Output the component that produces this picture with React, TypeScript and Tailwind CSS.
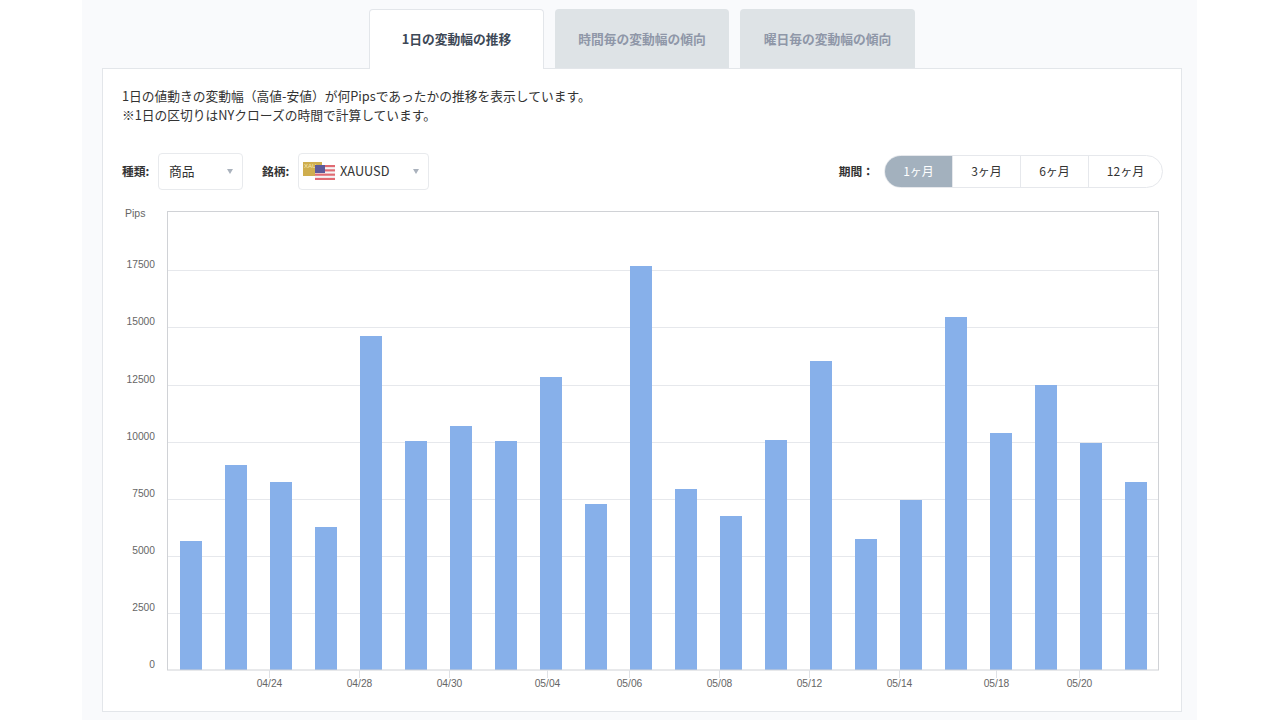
const TOPS = [541, 465, 482, 527, 336, 441, 426, 441, 377, 504, 266, 489, 516, 440, 361, 539, 500, 317, 433, 385, 443, 482];
const GRID = [
  { y: 270, label: '17500' },
  { y: 327, label: '15000' },
  { y: 385, label: '12500' },
  { y: 442, label: '10000' },
  { y: 499, label: '7500' },
  { y: 556, label: '5000' },
  { y: 613, label: '2500' },
];
const TICKS = [
  { x: 269, label: '04/24' },
  { x: 359, label: '04/28' },
  { x: 449, label: '04/30' },
  { x: 547, label: '05/04' },
  { x: 629, label: '05/06' },
  { x: 719, label: '05/08' },
  { x: 809, label: '05/12' },
  { x: 899, label: '05/14' },
  { x: 996, label: '05/18' },
  { x: 1079, label: '05/20' },
];
const PERIODS = ['1ヶ月', '3ヶ月', '6ヶ月', '12ヶ月'];

function Caret() {
  return <span className="h-0 w-0 border-x-[3.5px] border-t-[5px] border-x-transparent border-t-[#aab2bd]" />;
}

function XauFlag() {
  return (
    <svg width="33" height="18" viewBox="0 0 33 18" className="shrink-0">
      <rect x="0" y="0" width="19" height="14" fill="#cfae4e" />
      <text x="1" y="6" fontSize="6" fill="#f5e7b5" fontFamily="Liberation Sans, sans-serif">XAU</text>
      <rect x="12" y="3" width="20" height="15" fill="#f4f4f6" />
      {[0, 2, 4, 6].map((i) => (
        <rect key={i} x="12" y={3 + i * 2.15} width="20" height="2.15" fill="#e06a72" />
      ))}
      <rect x="12" y="3" width="10" height="8" fill="#5c5a9a" />
    </svg>
  );
}

function Chart() {
  return (
    <svg width="1078" height="510" viewBox="103 205 1078 510" className="block" fontFamily="Liberation Sans, Arial, sans-serif">
      <text x="125" y="217" fontSize="10.5" fill="#666">Pips</text>
      {GRID.map((g) => (
        <g key={g.y}>
          <line x1="167" x2="1159" y1={g.y + 0.5} y2={g.y + 0.5} stroke="#e6e8ec" />
          <text x="155" y={g.y - 2} fontSize="10.25" fill="#666" textAnchor="end">{g.label}</text>
        </g>
      ))}
      <text x="155" y="668" fontSize="10.25" fill="#666" textAnchor="end">0</text>
      {TOPS.map((top, i) => (
        <rect key={i} x={180 + i * 45} y={top} width="22" height={670 - top} fill="#87b0ea" />
      ))}
      <rect x="167.5" y="211.5" width="991" height="458.5" fill="none" stroke="#d0d2d6" />
      {TICKS.map((t) => (
        <g key={t.x}>
          <line x1={t.x + 0.5} x2={t.x + 0.5} y1="670" y2="678" stroke="#e0e2e6" />
          <text x={t.x + 0.5} y="687" fontSize="10.25" fill="#666" textAnchor="middle">{t.label}</text>
        </g>
      ))}
    </svg>
  );
}

export default function App() {
  return (
    <div className="h-[720px] w-[1280px] overflow-hidden bg-white font-['Noto_Sans_CJK_JP','Noto_Sans',sans-serif] text-[#333]">
      <div className="ml-[82px] h-full w-[1115px] bg-[#f9fafc] pt-[9px]">
        <div className="relative z-10 ml-[287px] flex gap-[11px]">
          <div className="-mb-px flex h-[60px] w-[175px] items-center justify-center rounded-t border border-b-0 border-[#e3e6ea] bg-white pb-[1px] text-[12.75px] font-bold text-[#3d4856]">
            1日の変動幅の推移
          </div>
          <div className="flex h-[59px] w-[174px] items-center justify-center rounded-t bg-[#dee3e6] text-[12.75px] font-bold text-[#8f97a8]">
            時間毎の変動幅の傾向
          </div>
          <div className="flex h-[59px] w-[175px] items-center justify-center rounded-t bg-[#dee3e6] text-[12.75px] font-bold text-[#8f97a8]">
            曜日毎の変動幅の傾向
          </div>
        </div>
        <div className="ml-[20px] h-[644px] w-[1080px] border border-[#e3e6ea] bg-white">
          <div className="pl-[19px] pr-[18px] pt-[17px]">
            <p className="text-[12.75px] leading-[19px]">
              1日の値動きの変動幅（高値-安値）が何Pipsであったかの推移を表示しています。
              <br />
              ※1日の区切りはNYクローズの時間で計算しています。
            </p>
            <div className="mt-[29px] flex h-[36px] items-center justify-between">
              <div className="flex items-center text-[12.75px]">
                <span className="w-[36px] text-[11.75px] font-bold">種類:</span>
                <div className="flex h-[37px] w-[85px] items-center justify-between rounded border border-[#e8eaed] pl-[10px] pr-[9px]">
                  <span>商品</span>
                  <Caret />
                </div>
                <span className="ml-[19px] w-[36px] text-[11.75px] font-bold">銘柄:</span>
                <div className="flex h-[37px] w-[131px] items-center rounded border border-[#e8eaed] pl-[4px] pr-[9px]">
                  <XauFlag />
                  <span className="ml-[4px]">XAUUSD</span>
                  <span className="ml-auto flex"><Caret /></span>
                </div>
              </div>
              <div className="flex items-center text-[12px]">
                <span className="mr-[10px] text-[11.75px] font-bold">期間：</span>
                <div className="flex h-[33px] overflow-hidden rounded-full border border-[#e6e8ec]">
                  {PERIODS.map((p, i) => (
                    <span
                      key={p}
                      className={
                        i === 0
                          ? 'flex w-[67px] items-center justify-center bg-[#a3b1be] text-white'
                          : i === 3
                            ? 'flex w-[74px] items-center justify-center border-l border-[#e6e8ec]'
                            : 'flex w-[68px] items-center justify-center border-l border-[#e6e8ec]'
                      }
                    >
                      {p}
                    </span>
                  ))}
                </div>
              </div>
            </div>
          </div>
          <div className="mt-[16px]">
            <Chart />
          </div>
        </div>
      </div>
    </div>
  );
}
